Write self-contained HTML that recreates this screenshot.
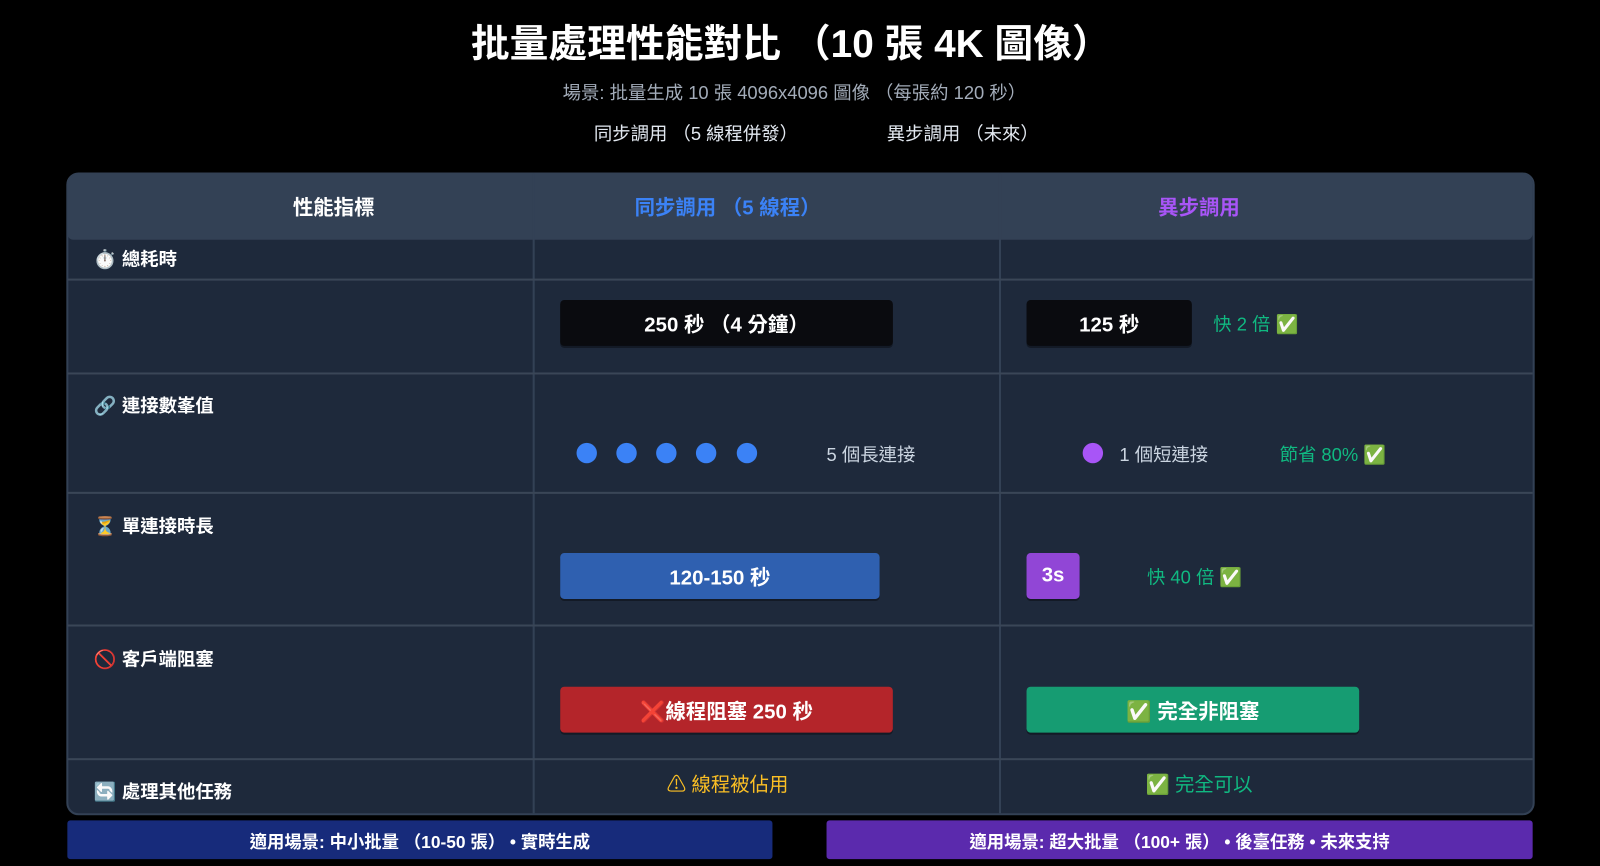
<!DOCTYPE html>
<html><head><meta charset="utf-8"><style>
html,body{margin:0;padding:0;background:#000;width:1600px;height:866px;overflow:hidden}
#w{position:absolute;left:0;top:0;width:1568px;height:849px;transform:scale(1.020408);transform-origin:0 0;font-family:"Liberation Sans","Noto Sans CJK TC",sans-serif;color:#fff}
.a{position:absolute;white-space:nowrap}
.c{text-align:center}
.hl{position:absolute;left:66px;width:1436px;height:2px;background:#3a4657}
.vl{position:absolute;top:170px;height:627px;width:2px;background:#334155}
.lab{position:absolute;left:92px;font-size:18px;font-weight:bold;line-height:22px}
.box{position:absolute;border-radius:4px;font-weight:bold;font-size:20px;display:flex;align-items:center;justify-content:center;box-shadow:0 2px 0 rgba(0,0,0,.35)}
.g{color:#10b981;font-size:18px}
.dot{position:absolute;top:434px;width:20px;height:20px;border-radius:50%;background:#3b82f6}
</style></head><body><div id="w">
<div class="a c" style="left:0;width:1550px;top:19px;font-size:38px;font-weight:bold;line-height:50px">批量處理性能對比 （10 張 4K 圖像）</div>
<div class="a c" style="left:0;width:1557px;top:80px;font-size:18px;color:#a3acb9;line-height:22px">場景: 批量生成 10 張 4096x4096 圖像 （每張約 120 秒）</div>
<div class="a" style="left:582px;top:120px;font-size:18px;color:#e2e8f0;line-height:22px">同步調用 （5 線程併發）</div>
<div class="a" style="left:869px;top:120px;font-size:18px;color:#e2e8f0;line-height:22px">異步調用 （未來）</div>

<div class="a" style="left:65px;top:169px;width:1435px;height:626px;background:#1e293b;border:2px solid #334155;border-radius:12px"></div>
<div class="a" style="left:66px;top:170px;width:1436px;height:65px;background:#334155;border-radius:11px 11px 6px 6px"></div>
<div class="vl" style="left:522px"></div><div class="vl" style="left:979px"></div>
<div class="a c" style="left:227px;width:200px;top:191px;font-size:20px;font-weight:bold;line-height:26px">性能指標</div>
<div class="a c" style="left:563px;width:300px;top:191px;font-size:20px;font-weight:bold;line-height:26px;color:#3b82f6">同步調用 （5 線程）</div>
<div class="a c" style="left:1025px;width:300px;top:191px;font-size:20px;font-weight:bold;line-height:26px;color:#a855f7">異步調用</div>

<div class="hl" style="top:273px"></div><div class="hl" style="top:365px"></div><div class="hl" style="top:482px"></div><div class="hl" style="top:612px"></div><div class="hl" style="top:743px"></div>

<div class="lab" style="top:243px">⏱️ 總耗時</div>
<div class="box" style="left:549px;top:294px;width:326px;height:45px;background:#0a0b0f">250 秒 （4 分鐘）</div>
<div class="box" style="left:1006px;top:294px;width:162px;height:45px;background:#0a0b0f">125 秒</div>
<div class="a g" style="left:1189px;top:304px">快 2 倍 ✅</div>

<div class="lab" style="top:387px">🔗 連接數峯值</div>
<div class="dot" style="left:565px"></div><div class="dot" style="left:604px"></div><div class="dot" style="left:643px"></div><div class="dot" style="left:682px"></div><div class="dot" style="left:722px"></div>
<div class="a" style="left:810px;top:432px;font-size:18px;color:#cbd5e1">5 個長連接</div>
<div class="dot" style="left:1061px;background:#a855f7"></div>
<div class="a" style="left:1097px;top:432px;font-size:18px;color:#cbd5e1">1 個短連接</div>
<div class="a g" style="left:1254px;top:432px">節省 80% ✅</div>

<div class="lab" style="top:505px">⏳ 單連接時長</div>
<div class="box" style="left:549px;top:542px;width:313px;height:45px;background:#2f60b0">120-150 秒</div>
<div class="box" style="left:1006px;top:542px;width:52px;height:45px;background:#9146d6">3s</div>
<div class="a g" style="left:1124px;top:552px">快 40 倍 ✅</div>

<div class="lab" style="top:635px">🚫 客戶端阻塞</div>
<div class="box" style="left:549px;top:673px;width:326px;height:45px;background:#b4252a">❌線程阻塞 250 秒</div>
<div class="box" style="left:1006px;top:673px;width:326px;height:45px;background:#169c72">✅ 完全非阻塞</div>

<div class="lab" style="top:765px">🔄 處理其他任務</div>
<div class="a c" style="left:523px;width:380px;top:754px;font-size:19px;color:#fbbf24">⚠ 線程被佔用</div>
<div class="a c" style="left:980px;width:390px;top:754px;font-size:19px;color:#10b981">✅ 完全可以</div>

<div class="box" style="left:66px;top:804px;width:691px;height:38px;background:#172b7b;font-size:17px;border-radius:3px">適用場景: 中小批量 （10-50 張） • 實時生成</div>
<div class="box" style="left:810px;top:804px;width:692px;height:38px;background:#5b2aad;font-size:17px;border-radius:3px">適用場景: 超大批量 （100+ 張） • 後臺任務 • 未來支持</div>
</div></body></html>
